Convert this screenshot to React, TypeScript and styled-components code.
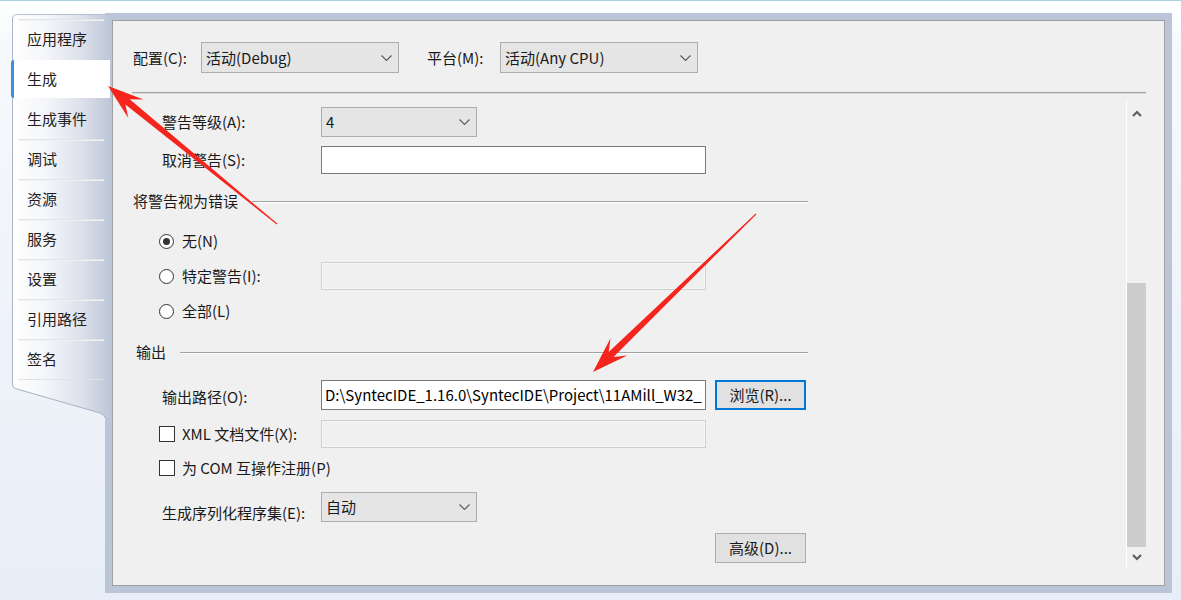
import React from "react";
import styled, { createGlobalStyle } from "styled-components";

const Global = createGlobalStyle`
  html, body { margin: 0; padding: 0; }
  body { font-family: "Noto Sans CJK SC", "Noto Sans", sans-serif; }
`;

const Page = styled.div`
  position: relative;
  width: 1181px;
  height: 600px;
  box-sizing: border-box;
  overflow: hidden;
  border-top: 1px solid #a9d1e3;
  background: linear-gradient(180deg, #ffffff 0px, #f6f9fc 40px, #e8eef7 100%);
  padding: 12px 9px 0 12px;
  display: flex;
  align-items: flex-start;
  font-size: 15px;
  color: #1a1a1a;
  font-family: "Noto Sans CJK SC", "Noto Sans", sans-serif;
`;

const TabColumn = styled.div`
  position: relative;
  z-index: 1;
  width: 98px;
  margin-top: 1px;
  margin-right: -5px;
  flex: none;
  display: flex;
  flex-direction: column;
`;

const TabList = styled.div`
  box-sizing: border-box;
  border-left: 1px solid #aab3c7;
  border-top: 1px solid #b8c0d2;
  border-radius: 5px 0 0 0;
  padding-top: 4px;
  background: linear-gradient(90deg, #ffffff 0%, #f3f5f9 35%, #dde1eb 70%, #bec6d8 100%);
`;

const Tab = styled.div<{ $selected?: boolean; $noSep?: boolean }>`
  position: relative;
  height: 40px;
  box-sizing: border-box;
  display: flex;
  align-items: center;
  padding-left: 14px;
  line-height: 20px;
  color: #1e1e1e;
  &::before {
    content: "";
    display: ${(p) => (p.$noSep || p.$selected ? "none" : "block")};
    position: absolute;
    top: 0;
    left: 5px;
    right: 6px;
    height: 2px;
    background: linear-gradient(180deg, #d7d9de, #fbfbfc);
  }
  ${(p) =>
    p.$selected
      ? `
    margin: 1px 0 1px -2px;
    height: 38px;
    background: #ffffff;
    border-left: 3px solid #3d8ee2;
    border-radius: 3px 0 0 3px;
    padding-left: 13px;
  `
      : ""}
`;

const TabSep = styled.div`
  margin: 0 6px 0 5px;
  height: 2px;
  background: linear-gradient(180deg, #d7d9de, #fbfbfc);
`;

const TabTail = styled.svg`
  display: block;
  width: 98px;
  height: 38px;
  margin-top: -1px;
`;

const Frame = styled.div`
  flex: none;
  width: 1067px;
  height: 580px;
  box-sizing: border-box;
  padding: 7px;
  background: #bcc5d8;
`;

const Panel = styled.div`
  width: 100%;
  height: 100%;
  box-sizing: border-box;
  border: 1px solid #a0a0a0;
  background: #f0f0f0;
  padding: 21px 18px 0 19px;
  display: flex;
  flex-direction: column;
`;

const TopBar = styled.div`
  display: flex;
  align-items: center;
  height: 31px;
  padding-left: 1px;
`;

const TopLabel = styled.span<{ $w: number; $ml?: number }>`
  width: ${(p) => p.$w}px;
  margin-left: ${(p) => p.$ml || 0}px;
  flex: none;
  white-space: nowrap;
  line-height: 20px;
`;

const Combo = styled.div<{ $w: number; $h?: number }>`
  position: relative;
  flex: none;
  width: ${(p) => p.$w}px;
  height: ${(p) => p.$h || 30}px;
  box-sizing: border-box;
  border: 1px solid #adadad;
  background: #e5e5e5;
  padding-left: 4px;
  display: flex;
  align-items: center;
  line-height: 20px;
  white-space: nowrap;
`;

const Chevron = styled.svg`
  position: absolute;
  right: 6px;
  top: 50%;
  margin-top: -3px;
  width: 11px;
  height: 6px;
`;

const ScrollViewer = styled.div`
  margin-top: 19px;
  height: 476px;
  box-sizing: border-box;
  border-top: 1px solid #a0a0a0;
  box-shadow: inset 0 1px 0 #dadada;
  display: flex;
`;

const Content = styled.div`
  width: 675px;
  flex: none;
  display: flex;
  flex-direction: column;
`;

const Spacer = styled.div`
  flex: 1;
`;

const Gap = styled.div<{ $w: number }>`
  flex: none;
  width: ${(p) => p.$w}px;
`;

const ScrollBar = styled.div`
  width: 20px;
  margin-top: 7px;
  box-sizing: border-box;
  border-left: 1px solid #ffffff;
  display: flex;
  flex-direction: column;
`;

const ScrollBtn = styled.div<{ $h: number }>`
  height: ${(p) => p.$h}px;
  flex: none;
  display: flex;
  align-items: center;
  justify-content: center;
`;

const Thumb = styled.div`
  margin-top: 157px;
  height: 264px;
  flex: none;
  background: #cdcdcd;
`;

const Row = styled.div<{ $h: number; $mt: number }>`
  display: flex;
  align-items: center;
  height: ${(p) => p.$h}px;
  margin-top: ${(p) => p.$mt}px;
  flex: none;
`;

const FieldLabel = styled.span<{ $dy?: number }>`
  width: 159px;
  margin-left: 30px;
  flex: none;
  line-height: 20px;
  white-space: nowrap;
  position: relative;
  top: ${(p) => p.$dy || 0}px;
`;

const TextBox = styled.div<{ $disabled?: boolean }>`
  width: 385px;
  height: 100%;
  flex: none;
  box-sizing: border-box;
  border: 1px solid ${(p) => (p.$disabled ? "#cfcfcf" : "#7a7a7a")};
  background: ${(p) => (p.$disabled ? "#f0f0f0" : "#ffffff")};
  box-shadow: ${(p) => (p.$disabled ? "inset 0 0 0 1px #f6f6f6" : "none")};
  padding-left: 3px;
  display: flex;
  align-items: center;
  overflow: hidden;
  white-space: nowrap;
  line-height: 20px;
  color: #000;
`;

const Button = styled.div<{ $focused?: boolean }>`
  width: 91px;
  height: 30px;
  flex: none;
  box-sizing: border-box;
  border: ${(p) => (p.$focused ? "2px solid #0078d7" : "1px solid #adadad")};
  background: #e1e1e1;
  display: flex;
  align-items: center;
  justify-content: center;
  line-height: 20px;
  white-space: nowrap;
`;

const GroupHeader = styled.div<{ $mt: number; $indent: number }>`
  display: flex;
  align-items: center;
  height: 20px;
  margin-top: ${(p) => p.$mt}px;
  padding-left: ${(p) => p.$indent}px;
  flex: none;
  line-height: 20px;
`;

const GroupLine = styled.div`
  flex: 1;
  height: 1px;
  margin-left: 14px;
  margin-right: -1px;
  background: #a0a0a0;
  box-shadow: 0 1px 0 #ffffff;
`;

const Choice = styled.label<{ $w?: number }>`
  display: flex;
  align-items: center;
  margin-left: 27px;
  width: ${(p) => (p.$w ? `${p.$w}px` : "auto")};
  flex: none;
  line-height: 20px;
  white-space: nowrap;
`;

const RadioDot = styled.span<{ $checked?: boolean }>`
  width: 15px;
  height: 15px;
  box-sizing: border-box;
  border: 1px solid #333333;
  border-radius: 50%;
  background: #ffffff;
  margin-right: 8px;
  display: inline-flex;
  align-items: center;
  justify-content: center;
  flex: none;
  &::after {
    content: "";
    display: ${(p) => (p.$checked ? "block" : "none")};
    width: 7px;
    height: 7px;
    border-radius: 50%;
    background: #333333;
  }
`;

const CheckBox = styled.span`
  width: 16px;
  height: 16px;
  box-sizing: border-box;
  border: 1px solid #333333;
  background: #ffffff;
  margin-right: 7px;
  flex: none;
`;

const BtnRow = styled.div<{ $mt: number }>`
  display: flex;
  justify-content: flex-end;
  height: 30px;
  margin-top: ${(p) => p.$mt}px;
  padding-right: 1px;
`;

const Overlay = styled.svg`
  position: absolute;
  left: 0;
  top: 0;
  width: 1181px;
  height: 600px;
  pointer-events: none;
  z-index: 5;
`;

const ComboChevron = () => (
  <Chevron viewBox="0 0 11 6">
    <polyline points="0.5,0.5 5.5,5.5 10.5,0.5" fill="none" stroke="#5a5a5a" strokeWidth="1.1" />
  </Chevron>
);

const ScrollArrow = ({ up }: { up?: boolean }) => (
  <svg width="10" height="7" viewBox="0 0 10 7">
    <polyline
      points={up ? "1,6 5,2 9,6" : "1,1 5,5 9,1"}
      fill="none"
      stroke="#606060"
      strokeWidth="2.2"
    />
  </svg>
);

type ArrowProps = { x1: number; y1: number; x2: number; y2: number };

const RedArrow = ({ x1, y1, x2, y2 }: ArrowProps) => {
  const dx = x2 - x1;
  const dy = y2 - y1;
  const len = Math.hypot(dx, dy);
  const ux = dx / len;
  const uy = dy / len;
  const nx = -uy;
  const ny = ux;
  const L = 36;
  const hw = 12;
  const sx = x2 - ux * L * 0.7;
  const sy = y2 - uy * L * 0.7;
  const wx = x2 - ux * L;
  const wy = y2 - uy * L;
  const pts = [
    [x1 + nx * 0.5, y1 + ny * 0.5],
    [sx + nx * 3.4, sy + ny * 3.4],
    [wx + nx * hw, wy + ny * hw],
    [x2, y2],
    [wx - nx * hw, wy - ny * hw],
    [sx - nx * 3.4, sy - ny * 3.4],
    [x1 - nx * 0.5, y1 - ny * 0.5],
  ]
    .map((p) => `${p[0].toFixed(1)},${p[1].toFixed(1)}`)
    .join(" ");
  return <polygon points={pts} fill="#f5241c" />;
};

const tabs = ["应用程序", "生成", "生成事件", "调试", "资源", "服务", "设置", "引用路径", "签名"];

export default function App() {
  return (
    <>
      <Global />
      <Page>
        <TabColumn>
          <TabList>
            {tabs.map((t, i) => (
              <Tab key={t} $selected={i === 1} $noSep={i === 2}>
                {t}
              </Tab>
            ))}
            <TabSep />
          </TabList>
          <TabTail viewBox="0 0 98 38">
            <defs>
              <linearGradient id="tailg" x1="0" y1="0" x2="98" y2="0" gradientUnits="userSpaceOnUse">
                <stop offset="0" stopColor="#ffffff" />
                <stop offset="0.35" stopColor="#f3f5f9" />
                <stop offset="0.7" stopColor="#dde1eb" />
                <stop offset="1" stopColor="#bec6d8" />
              </linearGradient>
            </defs>
            <path
              d="M0.5,0 L0.5,4 Q0.5,8 5,9 L88,33 Q93,34.5 93,38 L98,38 L98,0 Z"
              fill="url(#tailg)"
            />
            <path
              d="M0.5,0 L0.5,4 Q0.5,8 5,9 L88,33 Q93,34.5 93,38"
              fill="none"
              stroke="#a7b1c6"
              strokeWidth="1"
            />
          </TabTail>
        </TabColumn>
        <Frame>
          <Panel>
            <TopBar>
              <TopLabel $w={68}>配置(C):</TopLabel>
              <Combo $w={198} $h={31}>
                活动(Debug)
                <ComboChevron />
              </Combo>
              <TopLabel $w={73} $ml={28}>
                平台(M):
              </TopLabel>
              <Combo $w={198} $h={31}>
                活动(Any CPU)
                <ComboChevron />
              </Combo>
            </TopBar>
            <ScrollViewer>
              <Content>
                <Row $h={30} $mt={14}>
                  <FieldLabel>警告等级(A):</FieldLabel>
                  <Combo $w={156}>
                    4
                    <ComboChevron />
                  </Combo>
                </Row>
                <Row $h={28} $mt={9}>
                  <FieldLabel>取消警告(S):</FieldLabel>
                  <TextBox />
                </Row>
                <GroupHeader $mt={17} $indent={1}>
                  将警告视为错误
                  <GroupLine />
                </GroupHeader>
                <Row $h={28} $mt={16}>
                  <Choice>
                    <RadioDot $checked />
                    无(N)
                  </Choice>
                </Row>
                <Row $h={28} $mt={7}>
                  <Choice $w={162}>
                    <RadioDot />
                    特定警告(I):
                  </Choice>
                  <TextBox $disabled />
                </Row>
                <Row $h={28} $mt={7}>
                  <Choice>
                    <RadioDot />
                    全部(L)
                  </Choice>
                </Row>
                <GroupHeader $mt={17} $indent={4}>
                  输出
                  <GroupLine />
                </GroupHeader>
                <Row $h={30} $mt={18}>
                  <FieldLabel $dy={2}>输出路径(O):</FieldLabel>
                  <TextBox>D:\SyntecIDE_1.16.0\SyntecIDE\Project\11AMill_W32_</TextBox>
                  <Gap $w={9} />
                  <Button $focused>浏览(R)...</Button>
                </Row>
                <Row $h={28} $mt={10}>
                  <Choice $w={162}>
                    <CheckBox />
                    XML 文档文件(X):
                  </Choice>
                  <TextBox $disabled />
                </Row>
                <Row $h={28} $mt={6}>
                  <Choice>
                    <CheckBox />
                    为 COM 互操作注册(P)
                  </Choice>
                </Row>
                <Row $h={30} $mt={10}>
                  <FieldLabel $dy={6}>生成序列化程序集(E):</FieldLabel>
                  <Combo $w={156}>
                    自动
                    <ComboChevron />
                  </Combo>
                </Row>
                <BtnRow $mt={11}>
                  <Button>高级(D)...</Button>
                </BtnRow>
              </Content>
              <Spacer />
              <ScrollBar>
                <ScrollBtn $h={26}>
                  <ScrollArrow up />
                </ScrollBtn>
                <Thumb />
                <ScrollBtn $h={21}>
                  <ScrollArrow />
                </ScrollBtn>
              </ScrollBar>
            </ScrollViewer>
          </Panel>
        </Frame>
        <Overlay viewBox="0 0 1181 600">
          <RedArrow x1={277} y1={223} x2={108} y2={85} />
          <RedArrow x1={756} y1={213} x2={593} y2={371} />
        </Overlay>
      </Page>
    </>
  );
}
